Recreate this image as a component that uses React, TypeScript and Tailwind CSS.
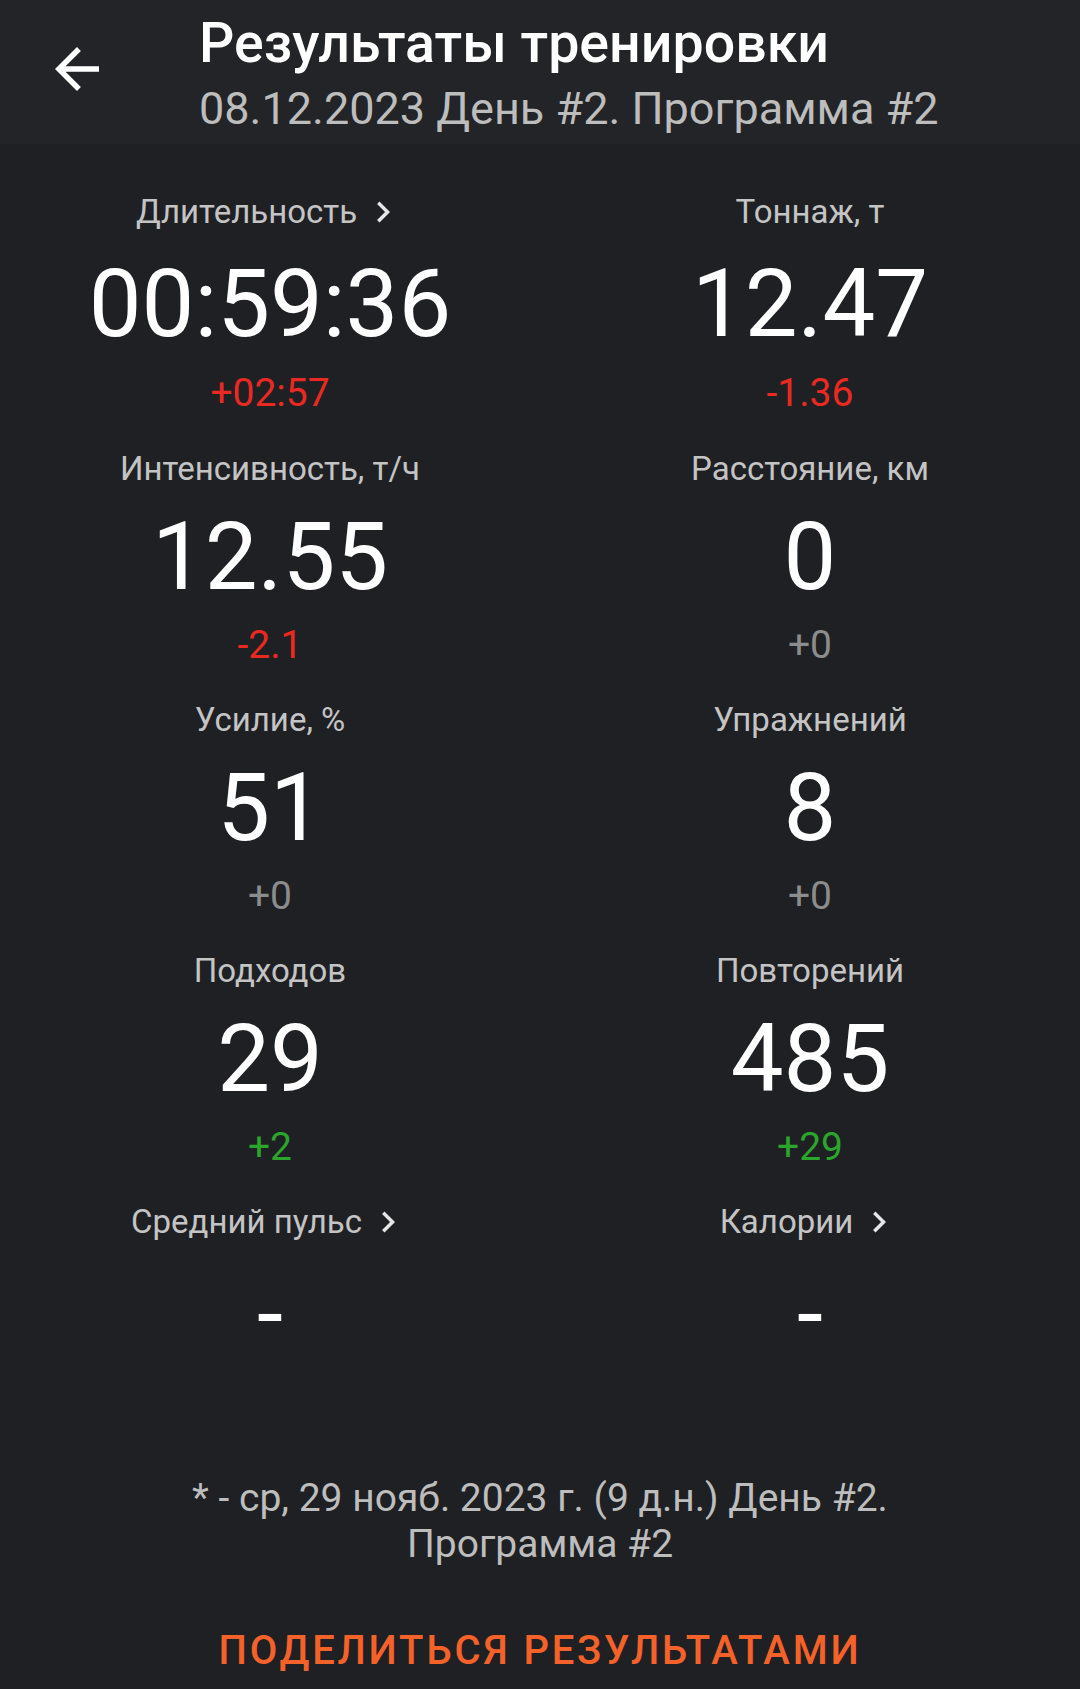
import React from 'react';

type Tone = 'red' | 'green' | 'gray';

interface Stat {
  label: string;
  value: string;
  delta?: string;
  tone?: Tone;
  link?: boolean;
}

const toneStyle: Record<Tone, string> = {
  red: 'text-[#ea2a22]',
  green: 'text-[#2ba52b]',
  gray: 'text-[#8c8c8c]'
};

const stats: Stat[] = [
  { label: 'Длительность', value: '00:59:36', delta: '+02:57', tone: 'red', link: true },
  { label: 'Тоннаж, т', value: '12.47', delta: '-1.36', tone: 'red' },
  { label: 'Интенсивность, т/ч', value: '12.55', delta: '-2.1', tone: 'red' },
  { label: 'Расстояние, км', value: '0', delta: '+0', tone: 'gray' },
  { label: 'Усилие, %', value: '51', delta: '+0', tone: 'gray' },
  { label: 'Упражнений', value: '8', delta: '+0', tone: 'gray' },
  { label: 'Подходов', value: '29', delta: '+2', tone: 'green' },
  { label: 'Повторений', value: '485', delta: '+29', tone: 'green' },
  { label: 'Средний пульс', value: '-', link: true },
  { label: 'Калории', value: '-', link: true }
];

const Chevron = () => (
  <svg viewBox="0 0 24 24" className="ml-[5px] h-[42px] w-[42px] fill-[#e6e6e6]">
    <path d="M10 6L8.59 7.41 13.17 12l-4.58 4.59L10 18l6-6z" />
  </svg>
);

const StatCell = ({ stat, first }: { stat: Stat; first: boolean }) => (
  <div className={`flex flex-col items-center ${first ? 'h-[257px]' : 'h-[251px]'}`}>
    <div className="flex h-[40px] items-center">
      <span className="text-[33px] leading-[40px] text-[#c4c4c4]">{stat.label}</span>
      {stat.link && <Chevron />}
    </div>
    <div
      className={`text-[94px] leading-[100px] text-white ${first || !stat.delta ? 'mt-[22px]' : 'mt-[18px]'}`}
    >
      {stat.value}
    </div>
    {stat.delta && (
      <div
        className={`text-[39px] leading-[44px] ${first ? 'mt-[17px]' : 'mt-[16px]'} ${toneStyle[stat.tone ?? 'gray']}`}
      >
        {stat.delta}
      </div>
    )}
  </div>
);

export default function App() {
  return (
    <div className="min-h-screen w-[1080px] bg-[#1f2024] font-['Roboto',sans-serif]">
      <header className="flex h-[144px] bg-[#232428]">
        <div className="ml-[44px] mt-[36px] h-[66px] w-[66px]">
          <svg viewBox="0 0 24 24" className="h-[66px] w-[66px] fill-white">
            <path d="M20 11H7.83l5.59-5.59L12 4l-8 8 8 8 1.41-1.41L7.83 13H20v-2z" />
          </svg>
        </div>
        <div className="ml-[89px] pt-[12px]">
          <h1 className="text-[55.5px] font-medium leading-[64px] text-white">Результаты тренировки</h1>
          <p className="mt-[7px] text-[45px] leading-[52px] text-[#bdbdbd]">08.12.2023 День #2. Программа #2</p>
        </div>
      </header>

      <section className="grid grid-cols-2 pt-[48px]">
        {stats.map((stat, i) => (
          <StatCell key={stat.label} stat={stat} first={i < 2} />
        ))}
      </section>

      <p className="mt-[22px] text-center text-[39px] leading-[46px] text-[#bdbdbd]">
        * - ср, 29 нояб. 2023 г. (9 д.н.) День #2.
        <br />
        Программа #2
      </p>

      <div className="mt-[60px] flex justify-center">
        <button className="text-[40px] font-medium uppercase leading-[48px] tracking-[0.07em] text-[#f4622a]">
          Поделиться результатами
        </button>
      </div>
    </div>
  );
}
